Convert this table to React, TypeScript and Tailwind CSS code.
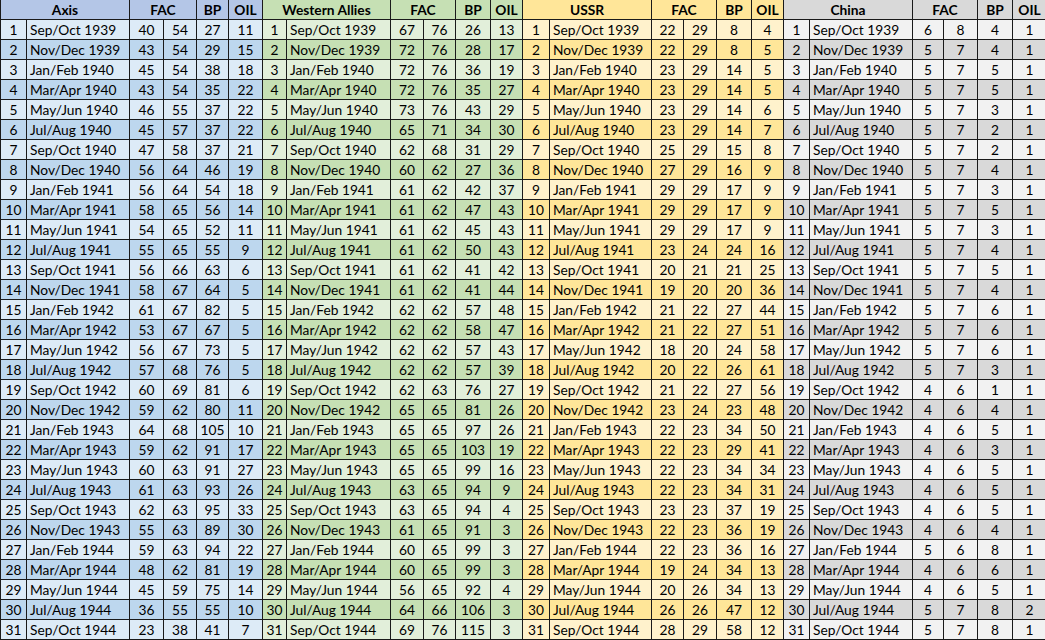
import React from "react";

type Row = [number, number, number, number];

const dates = [
  "Sep/Oct 1939", "Nov/Dec 1939", "Jan/Feb 1940", "Mar/Apr 1940", "May/Jun 1940", "Jul/Aug 1940",
  "Sep/Oct 1940", "Nov/Dec 1940", "Jan/Feb 1941", "Mar/Apr 1941", "May/Jun 1941", "Jul/Aug 1941",
  "Sep/Oct 1941", "Nov/Dec 1941", "Jan/Feb 1942", "Mar/Apr 1942", "May/Jun 1942", "Jul/Aug 1942",
  "Sep/Oct 1942", "Nov/Dec 1942", "Jan/Feb 1943", "Mar/Apr 1943", "May/Jun 1943", "Jul/Aug 1943",
  "Sep/Oct 1943", "Nov/Dec 1943", "Jan/Feb 1944", "Mar/Apr 1944", "May/Jun 1944", "Jul/Aug 1944",
  "Sep/Oct 1944",
];

const axis: Row[] = [
  [40, 54, 27, 11], [43, 54, 29, 15], [45, 54, 38, 18], [43, 54, 35, 22], [46, 55, 37, 22],
  [45, 57, 37, 22], [47, 58, 37, 21], [56, 64, 46, 19], [56, 64, 54, 18], [58, 65, 56, 14],
  [54, 65, 52, 11], [55, 65, 55, 9], [56, 66, 63, 6], [58, 67, 64, 5], [61, 67, 82, 5],
  [53, 67, 67, 5], [56, 67, 73, 5], [57, 68, 76, 5], [60, 69, 81, 6], [59, 62, 80, 11],
  [64, 68, 105, 10], [59, 62, 91, 17], [60, 63, 91, 27], [61, 63, 93, 26], [62, 63, 95, 33],
  [55, 63, 89, 30], [59, 63, 94, 22], [48, 62, 81, 19], [45, 59, 75, 14], [36, 55, 55, 10],
  [23, 38, 41, 7],
];

const wa: Row[] = [
  [67, 76, 26, 13], [72, 76, 28, 17], [72, 76, 36, 19], [72, 76, 35, 27], [73, 76, 43, 29],
  [65, 71, 34, 30], [62, 68, 31, 29], [60, 62, 27, 36], [61, 62, 42, 37], [61, 62, 47, 43],
  [61, 62, 45, 43], [61, 62, 50, 43], [61, 62, 41, 42], [61, 62, 41, 44], [62, 62, 57, 48],
  [62, 62, 58, 47], [62, 62, 57, 43], [62, 62, 57, 39], [62, 63, 76, 27], [65, 65, 81, 26],
  [65, 65, 97, 26], [65, 65, 103, 19], [65, 65, 99, 16], [63, 65, 94, 9], [63, 65, 94, 4],
  [61, 65, 91, 3], [60, 65, 99, 3], [60, 65, 99, 3], [56, 65, 92, 4], [64, 66, 106, 3],
  [69, 76, 115, 3],
];

const ussr: Row[] = [
  [22, 29, 8, 4], [22, 29, 8, 5], [23, 29, 14, 5], [23, 29, 14, 5], [23, 29, 14, 6],
  [23, 29, 14, 7], [25, 29, 15, 8], [27, 29, 16, 9], [29, 29, 17, 9], [29, 29, 17, 9],
  [29, 29, 17, 9], [23, 24, 24, 16], [20, 21, 21, 25], [19, 20, 20, 36], [21, 22, 27, 44],
  [21, 22, 27, 51], [18, 20, 24, 58], [20, 22, 26, 61], [21, 22, 27, 56], [23, 24, 23, 48],
  [22, 23, 34, 50], [22, 23, 29, 41], [22, 23, 34, 34], [22, 23, 34, 31], [23, 23, 37, 19],
  [22, 23, 36, 19], [22, 23, 36, 16], [19, 24, 34, 13], [20, 26, 34, 13], [26, 26, 47, 12],
  [28, 29, 58, 12],
];

const china: Row[] = [
  [6, 8, 4, 1], [5, 7, 4, 1], [5, 7, 5, 1], [5, 7, 5, 1], [5, 7, 3, 1],
  [5, 7, 2, 1], [5, 7, 2, 1], [5, 7, 4, 1], [5, 7, 3, 1], [5, 7, 5, 1],
  [5, 7, 3, 1], [5, 7, 4, 1], [5, 7, 5, 1], [5, 7, 4, 1], [5, 7, 6, 1],
  [5, 7, 6, 1], [5, 7, 6, 1], [5, 7, 3, 1], [4, 6, 1, 1], [4, 6, 4, 1],
  [4, 6, 5, 1], [4, 6, 3, 1], [4, 6, 5, 1], [4, 6, 5, 1], [4, 6, 5, 1],
  [4, 6, 4, 1], [5, 6, 8, 1], [4, 6, 6, 1], [4, 6, 5, 1], [5, 7, 8, 2],
  [5, 7, 8, 1],
];

type Section = {
  name: string;
  data: Row[];
  head: string;
  light: string;
  dark: string;
};

const sections: Section[] = [
  { name: "Axis", data: axis, head: "bg-[#b4c6e7]", light: "bg-[#ddebf7]", dark: "bg-[#bdd7ee]" },
  { name: "Western Allies", data: wa, head: "bg-[#c6e0b4]", light: "bg-[#e2efda]", dark: "bg-[#c6e0b4]" },
  { name: "USSR", data: ussr, head: "bg-[#ffe699]", light: "bg-[#fff2cc]", dark: "bg-[#ffe699]" },
  { name: "China", data: china, head: "bg-[#d9d9d9]", light: "bg-[#f2f2f2]", dark: "bg-[#d9d9d9]" },
];

const cell = "flex items-center justify-center leading-none pt-px";

export default function App() {
  const cells: React.ReactNode[] = [];

  sections.forEach((s) => {
    cells.push(
      <div key={`h-${s.name}`} className={`${cell} ${s.head} col-span-2 font-bold`}>
        {s.name}
      </div>,
      <div key={`hf-${s.name}`} className={`${cell} ${s.head} col-span-2 font-bold`}>
        FAC
      </div>,
      <div key={`hb-${s.name}`} className={`${cell} ${s.head} font-bold`}>
        BP
      </div>,
      <div key={`ho-${s.name}`} className={`${cell} ${s.head} font-bold`}>
        OIL
      </div>
    );
  });

  dates.forEach((d, i) => {
    sections.forEach((s) => {
      const bg = i % 2 === 0 ? s.light : s.dark;
      const r = s.data[i];
      cells.push(
        <div key={`n-${s.name}-${i}`} className={`${cell} ${bg}`}>
          {i + 1}
        </div>,
        <div key={`d-${s.name}-${i}`} className={`flex items-center leading-none pt-px pl-[3px] whitespace-nowrap overflow-hidden ${bg}`}>
          {d}
        </div>,
        ...r.map((v, j) => (
          <div key={`v-${s.name}-${i}-${j}`} className={`${cell} ${bg}`}>
            {v}
          </div>
        ))
      );
    });
  });

  return (
    <div className="w-[1045px] h-[640px] overflow-hidden bg-white">
      <div
        className="grid w-max gap-px bg-[#1a1a1a] pl-px pb-px text-[13.75px] text-black auto-rows-[19px] grid-cols-[25px_102px_33px_32px_31px_33px_23px_103px_32px_31px_34px_31px_26px_101px_31px_32px_34px_31px_25px_102px_30px_33px_34px_33px]"
        style={{ fontFamily: "Lato, 'Open Sans', 'Noto Sans', sans-serif" }}
      >
        {cells}
      </div>
    </div>
  );
}
